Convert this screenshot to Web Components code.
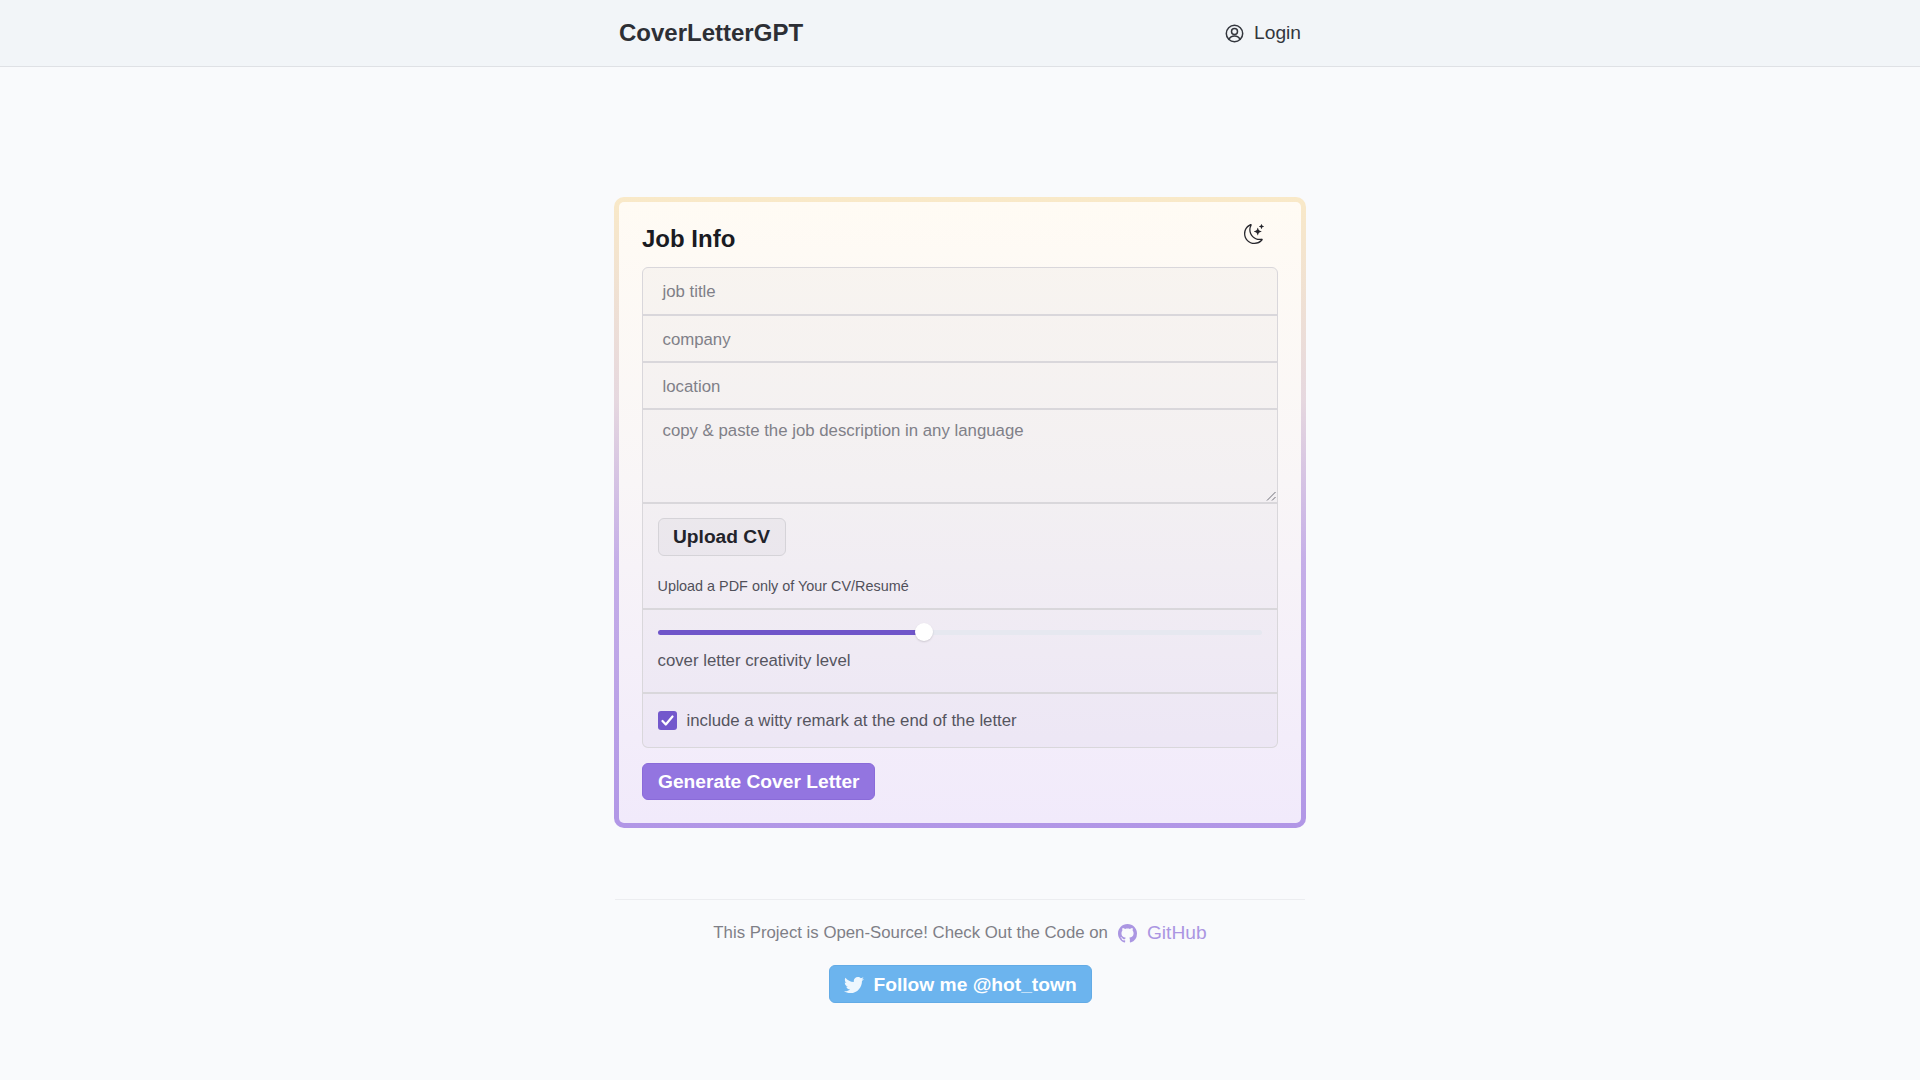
<!DOCTYPE html>
<html lang="en">
<head>
<meta charset="utf-8">
<title>CoverLetterGPT</title>
<style>
html,body{margin:0;padding:0;height:1080px;overflow:hidden;background:#f9fafc;font-family:"Liberation Sans",Arial,sans-serif;color:#1a202c}
main{display:flex;flex-direction:column;align-items:center;padding-top:130px}
</style>
</head>
<body>
<app-nav></app-nav>
<main>
  <job-card>
    <form-row kind="input">job title</form-row>
    <form-row kind="input">company</form-row>
    <form-row kind="input">location</form-row>
    <form-row kind="area">copy &amp; paste the job description in any language</form-row>
    <upload-row></upload-row>
    <slider-row></slider-row>
    <check-row></check-row>
  </job-card>
  <site-footer></site-footer>
</main>
<script>
function define(name, html){
  customElements.define(name, class extends HTMLElement{
    connectedCallback(){
      if(this.shadowRoot) return;
      const r=this.attachShadow({mode:'open'});
      r.innerHTML=html;
      const kind=this.getAttribute('kind');
      if(kind) r.host.classList.add(kind);
    }
  });
}
define('app-nav',`<style>
:host{display:block;height:66px;background:#f2f5f8;border-bottom:1px solid #dfe1e5}
.in{width:692px;height:100%;margin:0 auto;box-sizing:border-box;padding:0 5px;display:flex;align-items:center;justify-content:space-between}
b{font-size:24px;font-weight:700;color:#2d2f35}
.login{display:flex;align-items:center;gap:10px;font-size:19.2px;color:#33363d}
svg{display:block}
</style><div class="in"><b>CoverLetterGPT</b><div class="login">
<svg width="19" height="19" viewBox="0 0 19 19" fill="none" stroke="#33363d" stroke-width="1.5"><circle cx="9.5" cy="9.5" r="8.2"/><circle cx="9.5" cy="7.6" r="3"/><path d="M3.9 15.4c1-2.3 3-3.5 5.6-3.5s4.600 1.200 5.600 3.500" stroke-linecap="round"/></svg>
<span>Login</span></div></div>`);
define('job-card',`<style>
:host{display:block;width:692px;height:631px;box-sizing:border-box;border:5px solid transparent;border-radius:10px;padding:19px 23px 0;
background:linear-gradient(180deg,#fffbf4 0%,#f9f6f7 45%,#f1eafb 100%) padding-box,linear-gradient(180deg,#f9e9c8 0%,#e6d8df 32%,#c5aee8 58%,#b196e6 100%) border-box}
.head{display:flex;justify-content:space-between;height:46px;box-sizing:border-box}
h2{margin:0;padding-top:3px;font-size:24px;line-height:30px;font-weight:700;color:#1a1b22}
svg{display:block;margin:3px 14px 0 0}
.stack{display:flex;flex-direction:column}
button{all:unset;box-sizing:border-box;display:flex;align-items:center;width:233px;height:37px;margin-top:15px;padding-left:15px;background:#9375e0;border:1px solid #8a6bd9;border-radius:6px;color:#fff;font-size:19.2px;font-weight:700;white-space:nowrap}
</style>
<div class="head"><h2>Job Info</h2>
<svg width="20" height="20" viewBox="0 0 16 16" fill="#26262c"><path d="M6 .278a.768.768 0 0 1 .08.858 7.208 7.208 0 0 0-.878 3.46c0 4.021 3.278 7.277 7.318 7.277.527 0 1.04-.055 1.533-.16a.787.787 0 0 1 .81.316.733.733 0 0 1-.031.893A8.349 8.349 0 0 1 8.344 16C3.734 16 0 12.286 0 7.71 0 4.266 2.114 1.312 5.124.06A.752.752 0 0 1 6 .278zM4.858 1.311A7.269 7.269 0 0 0 1.025 7.71c0 4.02 3.279 7.276 7.319 7.276a7.316 7.316 0 0 0 5.205-2.162c-.337.042-.68.063-1.029.063-4.61 0-8.343-3.714-8.343-8.29 0-1.167.242-2.278.681-3.286z"/><path d="M10.794 3.148a.217.217 0 0 1 .412 0l.387 1.162c.173.518.579.924 1.097 1.097l1.162.387a.217.217 0 0 1 0 .412l-1.162.387a1.734 1.734 0 0 0-1.097 1.097l-.387 1.162a.217.217 0 0 1-.412 0l-.387-1.162A1.734 1.734 0 0 0 9.31 6.593l-1.162-.387a.217.217 0 0 1 0-.412l1.162-.387a1.734 1.734 0 0 0 1.097-1.097l.387-1.162zM13.863.099a.145.145 0 0 1 .274 0l.258.774c.115.346.386.617.732.732l.774.258a.145.145 0 0 1 0 .274l-.774.258a1.156 1.156 0 0 0-.732.732l-.258.774a.145.145 0 0 1-.274 0l-.258-.774a1.156 1.156 0 0 0-.732-.732l-.774-.258a.145.145 0 0 1 0-.274l.774-.258c.346-.115.617-.386.732-.732L13.863.1z"/></svg></div>
<div class="stack"><slot></slot></div>
<button>Generate Cover Letter</button>`);
const rowBase=`:host{display:block;box-sizing:border-box;border:1px solid #d9d7db;border-top-width:2px;margin-top:-1px;background:rgba(60,50,90,.03);color:#55555f}`;
define('form-row',`<style>${rowBase}
:host{position:relative;color:#808088;font-size:16.8px;padding:0 19.5px;height:48px;line-height:47px}
:host(:first-child){border-top-width:1px;border-radius:6px 6px 0 0;margin-top:0;height:48px}
:host(.area){height:95px;line-height:22px;padding-top:10px}
svg{display:none;position:absolute;right:1px;bottom:1px}
:host(.area) svg{display:block}
</style><slot></slot><svg width="11" height="11" viewBox="0 0 11 11" stroke="#6f6f78" stroke-width="1" fill="none"><path d="M2 10.500L10.500 2M7 10.500L10.500 7"/></svg>`);
define('upload-row',`<style>${rowBase}
:host{height:107px;padding:14px 15px 0 14.5px}
button{all:unset;box-sizing:border-box;display:flex;align-items:center;justify-content:center;width:128px;height:38px;border:1px solid #d5d3d8;border-radius:6px;background:rgba(60,50,90,.035);font-size:19.2px;font-weight:700;color:#22232a}
p{margin:20px 0 0;font-size:14.4px;line-height:20px;color:#50505a}
</style><button>Upload CV</button><p>Upload a PDF only of Your CV/Resumé</p>`);
define('slider-row',`<style>${rowBase}
:host{height:85px;padding:14px 15px 0 14.5px}
.track{position:relative;height:16px;display:flex;align-items:center}
.bar{flex:1;height:5px;border-radius:3px;background:linear-gradient(90deg,#6f55c9 0 44%,#e6e8f0 44% 100%)}
.thumb{position:absolute;left:calc(44% - 8.5px);top:-1px;width:18px;height:18px;border-radius:50%;background:#fff;box-shadow:0 1px 2px rgba(0,0,0,.15)}
p{margin:10px 0 0;font-size:16.8px;line-height:22px;color:#55555f}
</style><div class="track"><div class="bar"></div><div class="thumb"></div></div><p>cover letter creativity level</p>`);
define('check-row',`<style>${rowBase}
:host{height:56px;padding:0 15px 0 14.5px;display:flex;align-items:center;gap:10px;border-radius:0 0 6px 6px;font-size:16.8px;color:#55555f}
i{display:flex;align-items:center;justify-content:center;width:19px;height:19px;border-radius:3px;background:#7358cc}
</style><i><svg width="13" height="11" viewBox="0 0 13 11" fill="none" stroke="#fff" stroke-width="2.200" stroke-linecap="round" stroke-linejoin="round"><path d="M1.500 6l3.300 3.500L11.500 1.500"/></svg></i><span>include a witty remark at the end of the letter</span>`);
define('site-footer',`<style>
:host{display:flex;flex-direction:column;align-items:center;box-sizing:border-box;width:690px;margin-top:71px;border-top:1px solid #ecedf0;padding-top:21px}
.line{display:flex;align-items:center;font-size:16.8px;color:#7f7f87;height:24px}
a{display:flex;align-items:center;gap:10px;margin-left:10px;color:#ab96e2;font-size:19.2px;text-decoration:none}
button{all:unset;box-sizing:border-box;display:flex;align-items:center;gap:10px;padding:1px 0 0 14px;width:263px;height:38px;margin-top:20px;background:#6cb4ee;border:1px solid #63abe6;border-radius:6px;color:#fff;font-size:19.2px;font-weight:700;white-space:nowrap}
svg{display:block}
</style><div class="line"><span>This Project is Open-Source! Check Out the Code on</span><a href="#">
<svg width="19" height="19" viewBox="0 0 16 16" fill="#ab96e2"><path d="M8 0C3.580 0 0 3.580 0 8c0 3.540 2.290 6.530 5.470 7.590.400.070.550-.170.550-.380 0-.190-.010-.820-.010-1.490-2.010.370-2.530-.490-2.690-.940-.090-.230-.480-.940-.820-1.130-.280-.150-.680-.520-.010-.530.630-.010 1.080.580 1.230.820.720 1.210 1.870.870 2.330.660.070-.520.280-.870.510-1.070-1.780-.200-3.640-.890-3.640-3.950 0-.870.310-1.590.820-2.150-.080-.200-.360-1.020.080-2.120 0 0 .670-.210 2.200.820.640-.180 1.320-.270 2-.270.680 0 1.360.090 2 .270 1.530-1.040 2.200-.820 2.200-.820.440 1.100.160 1.920.080 2.120.510.560.820 1.270.820 2.150 0 3.070-1.870 3.750-3.650 3.950.290.250.540.730.540 1.480 0 1.070-.010 1.930-.010 2.200 0 .210.150.460.550.380A8.013 8.013 0 0016 8c0-4.420-3.580-8-8-8z"/></svg>
<span>GitHub</span></a></div>
<button><svg width="20" height="20" viewBox="0 0 512 512" fill="#eef7fe"><path d="M459.370 151.716c.325 4.548.325 9.097.325 13.645 0 138.720-105.583 298.558-298.558 298.558-59.452 0-114.680-17.219-161.137-47.106 8.447.974 16.568 1.299 25.340 1.299 49.055 0 94.213-16.568 130.274-44.832-46.132-.975-84.792-31.188-98.112-72.772 6.498.974 12.995 1.624 19.818 1.624 9.421 0 18.843-1.300 27.614-3.573-48.081-9.747-84.143-51.980-84.143-102.985v-1.299c13.969 7.797 30.214 12.670 47.431 13.319-28.264-18.843-46.781-51.005-46.781-87.391 0-19.492 5.197-37.360 14.294-52.954 51.655 63.675 129.300 105.258 216.365 109.807-1.624-7.797-2.599-15.918-2.599-24.040 0-57.828 46.782-104.934 104.934-104.934 30.213 0 57.502 12.670 76.670 33.137 23.715-4.548 46.456-13.320 66.599-25.340-7.798 24.366-24.366 44.833-46.132 57.827 21.117-2.273 41.584-8.122 60.426-16.243-14.292 20.791-32.161 39.308-52.628 54.253z"/></svg>
<span>Follow me @hot_town</span></button>`);
</script>
</body>
</html>
